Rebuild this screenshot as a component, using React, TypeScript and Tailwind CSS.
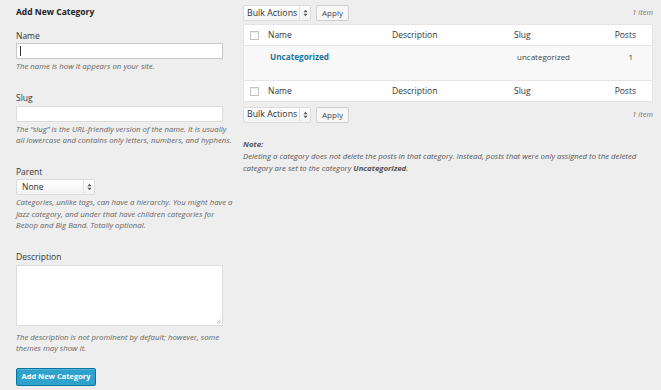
import React from "react";

const font = { fontFamily: '"Open Sans", "Liberation Sans", sans-serif' };

function Arrows() {
  return (
    <svg width="5" height="8" viewBox="0 0 5 8" className="block">
      <path d="M0.5 3.2 L2.5 0.8 L4.5 3.2 Z" fill="#555" />
      <path d="M0.5 4.8 L2.5 7.2 L4.5 4.8 Z" fill="#555" />
    </svg>
  );
}

function BulkSelect() {
  return (
    <div className="flex items-stretch h-[16px] w-[68px] border border-[#dcdcdc] rounded-[2px] bg-gradient-to-b from-[#ffffff] to-[#f3f3f3] text-[8.8px] text-[#333]">
      <div className="flex-1 flex items-center pl-[3px] leading-none whitespace-nowrap">Bulk Actions</div>
      <div className="w-[11px] border-l border-[#e2e2e2] flex items-center justify-center">
        <Arrows />
      </div>
    </div>
  );
}

function ApplyBtn() {
  return (
    <div className="h-[16px] w-[33px] border border-[#d0d0d0] rounded-[2px] bg-[#f7f7f7] flex items-center justify-center text-[8px] text-[#444] leading-none">
      Apply
    </div>
  );
}

function Checkbox() {
  return <div className="w-[9px] h-[9px] border border-[#c4c4c4] bg-white shadow-[inset_0_1px_1px_rgba(0,0,0,0.08)]" />;
}

function HeadRow({ border }: { border: "b" | "t" }) {
  return (
    <div
      className={`grid grid-cols-[24px_124px_122px_1fr_52px] items-center h-[21px] text-[8.5px] text-[#333] bg-white ${
        border === "b" ? "border-b border-[#e5e5e5]" : "border-t border-[#e5e5e5]"
      }`}
    >
      <div className="pl-[6px]">
        <Checkbox />
      </div>
      <div>Name</div>
      <div>Description</div>
      <div>Slug</div>
      <div className="text-right pr-[16px]">Posts</div>
    </div>
  );
}

export default function App() {
  return (
    <div style={font} className="w-[661px] h-[390px] bg-[#eeeeee] flex overflow-hidden text-[#444]">
      {/* Left column */}
      <div className="w-[243px] shrink-0 pl-[16px] pt-[6px]">
        <div className="h-[12px] leading-[12px] text-[8.5px] font-bold text-[#222] whitespace-nowrap">Add New Category</div>

        <div className="mt-[12px] h-[12px] leading-[12px] text-[8.5px] text-[#333]">Name</div>
        <div className="mt-[1px] w-[207px] h-[16px] border border-[#c8c8c8] bg-white flex items-center pl-[3px]">
          <div className="w-px h-[10px] bg-[#333]" />
        </div>
        <div className="mt-[2px] leading-[11px] text-[7.8px] italic text-[#666]">The name is how it appears on your site.</div>

        <div className="mt-[20px] h-[12px] leading-[12px] text-[8.5px] text-[#333]">Slug</div>
        <div className="mt-[2px] w-[207px] h-[16px] border border-[#dddddd] bg-white" />
        <div className="mt-[2px] w-[218px] leading-[11px] text-[7.8px] italic text-[#666]">
          The “slug” is the URL-friendly version of the name. It is usually all lowercase and contains only letters, numbers, and hyphens.
        </div>

        <div className="mt-[20px] h-[12px] leading-[12px] text-[8.5px] text-[#333]">Parent</div>
        <div className="mt-[1px] flex items-stretch w-[79px] h-[16px] border border-[#dcdcdc] rounded-[2px] bg-gradient-to-b from-[#ffffff] to-[#f3f3f3] text-[8.5px] text-[#333]">
          <div className="flex-1 flex items-center pl-[5px] leading-none">None</div>
          <div className="w-[11px] border-l border-[#e2e2e2] flex items-center justify-center">
            <Arrows />
          </div>
        </div>
        <div className="mt-[2px] w-[222px] leading-[11.5px] text-[7.8px] italic text-[#666]">
          Categories, unlike tags, can have a hierarchy. You might have a Jazz category, and under that have children categories for Bebop and Big Band. Totally optional.
        </div>

        <div className="mt-[19px] h-[12px] leading-[12px] text-[8.5px] text-[#333]">Description</div>
        <div className="mt-[2px] w-[207px] h-[61px] border border-[#dddddd] bg-white relative">
          <svg width="5" height="5" viewBox="0 0 5 5" className="absolute right-[1px] bottom-[1px]">
            <path d="M4.5 0.5 L0.5 4.5 M4.5 2.5 L2.5 4.5" stroke="#999" strokeWidth="0.6" />
          </svg>
        </div>
        <div className="mt-[6px] w-[216px] leading-[11px] text-[7.8px] italic text-[#666]">
          The description is not prominent by default; however, some themes may show it.
        </div>

        <div className="mt-[14px] w-[80px] h-[18px] rounded-[2px] bg-[#2ea2cc] border border-[#0074a2] shadow-[inset_0_1px_0_rgba(120,200,230,0.5)] flex items-center justify-center text-[7.5px] font-bold text-white leading-none whitespace-nowrap">
          Add New Category
        </div>
      </div>

      {/* Right column */}
      <div className="w-[410px] shrink-0 pt-[5px]">
        <div className="flex items-center h-[16px]">
          <BulkSelect />
          <div className="ml-[5px]">
            <ApplyBtn />
          </div>
          <div className="ml-auto text-[7.5px] italic text-[#777]">1 item</div>
        </div>

        <div className="mt-[3px] border border-[#e5e5e5] bg-white">
          <HeadRow border="b" />
          <div className="grid grid-cols-[24px_124px_122px_1fr_52px] h-[34px] bg-[#f9f9f9] pt-[5px]">
            <div />
            <div className="pl-[2px] text-[8.2px] font-bold text-[#21759b]">Uncategorized</div>
            <div />
            <div className="pl-[3px] text-[8px] text-[#444]">uncategorized</div>
            <div className="text-right pr-[19px] text-[8px] text-[#444]">1</div>
          </div>
          <HeadRow border="t" />
        </div>

        <div className="mt-[4px] flex items-center h-[17px]">
          <BulkSelect />
          <div className="ml-[5px]">
            <ApplyBtn />
          </div>
          <div className="ml-auto text-[7.5px] italic text-[#777]">1 item</div>
        </div>

        <div className="mt-[15px] text-[7.8px] italic text-[#555] leading-[12px]">
          <div className="font-bold">Note:</div>
          <div>
            Deleting a category does not delete the posts in that category. Instead, posts that were only assigned to the deleted category are set to the category <span className="font-bold">Uncategorized</span>.
          </div>
        </div>
      </div>
    </div>
  );
}
